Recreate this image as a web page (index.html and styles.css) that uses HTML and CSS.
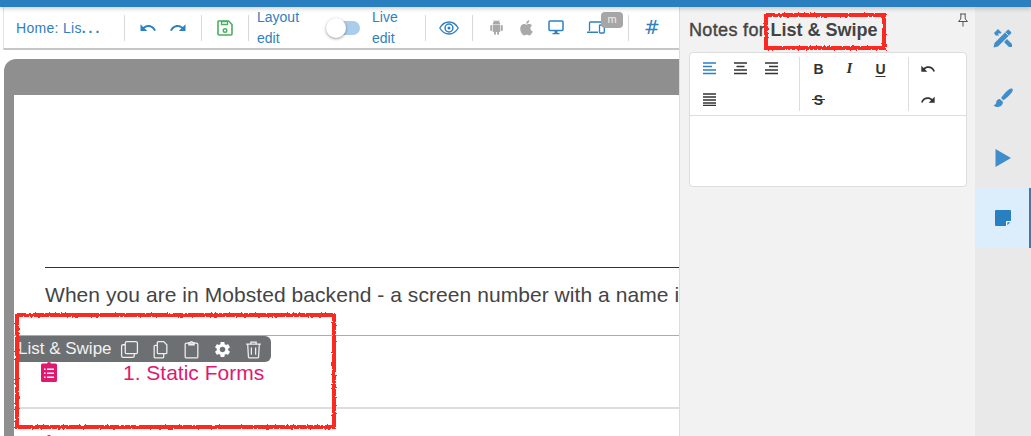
FILE: index.html
```html
<!DOCTYPE html>
<html lang="en">
<head>
<meta charset="utf-8">
<title>Notes for List &amp; Swipe</title>
<link rel="stylesheet" href="styles.css">
</head>
<body>
<svg class="defs" width="0" height="0" aria-hidden="true">
  <defs>
    <filter id="rough" x="-5%" y="-10%" width="110%" height="120%">
      <feTurbulence type="fractalNoise" baseFrequency="0.5" numOctaves="2" seed="4"/>
      <feDisplacementMap in="SourceGraphic" scale="3"/>
      <feGaussianBlur stdDeviation=".35"/>
    </filter>
    <symbol id="undo" viewBox="0 0 24 24"><path d="M12.5 8c-2.65 0-5.05.99-6.9 2.6L2 7v9h9l-3.62-3.62c1.39-1.16 3.16-1.88 5.12-1.88 3.54 0 6.55 2.31 7.6 5.5l2.37-.78C21.08 11.03 17.15 8 12.5 8z"/></symbol>
    <symbol id="redo" viewBox="0 0 24 24"><path d="M18.4 10.6C16.55 8.99 14.15 8 11.5 8c-4.65 0-8.58 3.03-9.96 7.22L3.9 16c1.05-3.19 4.05-5.5 7.6-5.5 1.95 0 3.73.72 5.12 1.88L13 16h9V7l-3.6 3.6z"/></symbol>
  </defs>
</svg>
<div class="topbar"></div>
<div class="app">
  <main class="main">
    <nav class="toolbar">
      <span class="crumb">Home: Lis<span class="dots">...</span></span>
      <i class="sep"></i>
      <div class="tool-group">
        <svg class="ic ic-blue ic-18" viewBox="0 0 24 24"><use href="#undo"/></svg>
        <svg class="ic ic-blue ic-18" viewBox="0 0 24 24"><use href="#redo"/></svg>
      </div>
      <i class="sep"></i>
      <svg class="ic-save" viewBox="0 0 16 16"><path d="M1.5 1h10L15 4.5V14a1 1 0 0 1-1 1H2a1 1 0 0 1-1-1V1.500z" fill="none" stroke="#4caf60" stroke-width="1.600"/><path d="M4.500 1.500h6v3h-6z" fill="none" stroke="#4caf60" stroke-width="1.300"/><circle cx="8" cy="10.500" r="1.800" fill="none" stroke="#4caf60" stroke-width="1.400"/></svg>
      <i class="sep"></i>
      <span class="mode mode-layout">Layout edit</span>
      <span class="switch"><span class="knob"></span></span>
      <span class="mode mode-live">Live edit</span>
      <i class="sep"></i>
      <svg class="ic-eye" viewBox="0 0 20 14"><path d="M.8 7C3 3.200 6.200 1 10 1s7 2.200 9.200 6C17 10.800 13.800 13 10 13S3 10.800.8 7z" fill="none" stroke="#2f80c2" stroke-width="1.300"/><circle cx="10" cy="7" r="3.900" fill="none" stroke="#2f80c2" stroke-width="1.500"/><circle cx="10" cy="7" r="1.500" fill="#2f80c2"/></svg>
      <i class="sep"></i>
      <div class="devices">
        <svg class="ic ic-grey dev-android" viewBox="0 0 24 24"><path d="M6 18c0 .55.45 1 1 1h1v3.500c0 .83.67 1.500 1.500 1.500s1.500-.67 1.500-1.500V19h2v3.500c0 .83.67 1.500 1.500 1.500s1.500-.67 1.500-1.500V19h1c.55 0 1-.45 1-1V8H6v10zM3.500 8C2.670 8 2 8.670 2 9.500v7c0 .83.67 1.500 1.500 1.500S5 17.330 5 16.500v-7C5 8.670 4.330 8 3.500 8zm17 0c-.83 0-1.500.67-1.500 1.500v7c0 .83.67 1.500 1.500 1.500s1.500-.67 1.500-1.500v-7c0-.83-.67-1.500-1.500-1.500zm-4.970-5.840l1.300-1.300c.2-.2.2-.51 0-.71-.2-.2-.51-.2-.71 0l-1.480 1.480C13.850 1.230 12.950 1 12 1c-.96 0-1.860.23-2.660.63L7.850.15c-.2-.2-.51-.2-.71 0-.2.2-.2.51 0 .71l1.310 1.310C6.970 3.260 6 5.010 6 7h12c0-1.990-.97-3.750-2.470-4.840z"/></svg>
        <svg class="ic ic-grey dev-apple" viewBox="3 2 17 20"><path d="M17 12.500c0-2.400 2-3.500 2-3.600-1.100-1.600-2.800-1.800-3.400-1.900-1.400-.1-2.800.9-3.500.9-.7 0-1.900-.9-3.100-.8-1.600 0-3.100.9-3.900 2.300-1.700 2.900-.4 7.200 1.200 9.500.8 1.100 1.800 2.400 3 2.400 1.200 0 1.700-.8 3.100-.8 1.500 0 1.900.8 3.200.8 1.300 0 2.100-1.200 2.900-2.300.9-1.300 1.300-2.600 1.300-2.700-.1 0-2.800-1-2.800-4.300zM14.600 5.300c.6-.8 1.100-1.900 1-3-.9 0-2.100.6-2.800 1.400-.6.7-1.100 1.800-1 2.900 1.100.1 2.100-.5 2.800-1.300z"/></svg>
        <svg class="dev-desktop" viewBox="0 0 16 15"><rect x="1" y="1" width="14" height="9.500" rx="1" fill="none" stroke="#2f80c2" stroke-width="1.500"/><path d="M6.500 11h3v2h-3zM4.500 13h7v1.200h-7z" fill="#2f80c2"/></svg>
        <span class="dev-laptop-wrap">
          <svg class="dev-laptop" viewBox="0 0 18 13"><path d="M2.500 10V2a1 1 0 0 1 1-1H14" fill="none" stroke="#2f80c2" stroke-width="1.300"/><path d="M0 10.500h11V12H0z" fill="#2f80c2"/><rect x="12.500" y="4" width="4.800" height="8" rx=".8" fill="none" stroke="#2f80c2" stroke-width="1.300"/></svg>
          <span class="badge">m</span>
        </span>
      </div>
      <i class="sep"></i>
      <span class="hash">#</span>
    </nav>
    <div class="canvas">
      <div class="device">
        <div class="screen">
          <hr class="rule">
          <p class="lead">When you are in Mobsted backend - a screen number with a name i</p>
          <div class="list-item">
            <div class="block-bar">
              <span class="block-name">List &amp; Swipe</span>
              <svg class="bar-ic" viewBox="0 0 18 18"><rect x="5" y="1.500" width="11.500" height="11.500" rx="1.500"/><path d="M5 4.500H3A1.500 1.500 0 0 0 1.500 6v9A1.500 1.500 0 0 0 3 16.500h9a1.500 1.500 0 0 0 1.500-1.500v-2"/></svg>
              <svg class="bar-ic" viewBox="0 0 18 18"><path d="M7 1.500h5l3 3V12a1 1 0 0 1-1 1H7a1 1 0 0 1-1-1V2.500a1 1 0 0 1 1-1z"/><path d="M6 5H4a1 1 0 0 0-1 1v10a1 1 0 0 0 1 1h7a1 1 0 0 0 1-1v-3"/></svg>
              <svg class="bar-ic" viewBox="0 0 18 18"><rect x="3" y="3" width="12" height="14" rx="1.200"/><path d="M6.500 4.500V2.500h1.500a1 1 0 0 1 2 0h1.500v2z"/></svg>
              <svg class="bar-ic bar-solid" viewBox="0 0 24 24"><path d="M19.140 12.940c.04-.3.06-.61.06-.94 0-.32-.02-.64-.07-.94l2.030-1.580c.18-.14.23-.41.12-.61l-1.920-3.320c-.12-.22-.37-.29-.59-.22l-2.390.96c-.5-.38-1.030-.7-1.620-.94l-.36-2.540c-.04-.24-.24-.41-.48-.41h-3.840c-.24 0-.43.17-.47.41l-.36 2.540c-.59.24-1.130.57-1.620.94l-2.390-.96c-.22-.08-.47 0-.59.22L2.740 8.870c-.12.21-.08.47.12.61l2.030 1.580c-.05.3-.09.63-.09.94s.02.64.07.94l-2.030 1.580c-.18.14-.23.41-.12.61l1.920 3.320c.12.22.37.29.59.22l2.390-.96c.5.38 1.030.7 1.620.94l.36 2.540c.05.24.24.41.48.41h3.840c.24 0 .44-.17.47-.41l.36-2.540c.59-.24 1.130-.56 1.620-.94l2.390.96c.22.08.47 0 .59-.22l1.920-3.320c.12-.22.07-.47-.12-.61l-2.010-1.580zM12 15.600c-1.980 0-3.600-1.620-3.600-3.600s1.620-3.600 3.600-3.600 3.600 1.620 3.600 3.600-1.620 3.600-3.600 3.600z"/></svg>
              <svg class="bar-ic" viewBox="0 0 18 18"><path d="M2 4h14M6.500 4V2h5v2M3.500 4l.7 12a1 1 0 0 0 1 1h7.600a1 1 0 0 0 1-1l.7-12M7 7v7M11 7v7"/></svg>
            </div>
            <svg class="form-ic" viewBox="0 0 16 20"><path d="M1.500 1.500H6a2 1.500 0 0 1 4 0h4.500a1.500 1.500 0 0 1 1.500 1.500v15.500a1.500 1.500 0 0 1-1.500 1.500h-13A1.500 1.500 0 0 1 0 18.500V3a1.500 1.500 0 0 1 1.500-1.500z" fill="#e0196f"/><path d="M3 6.500h1.500v1.500H3zM6 6.500h7v1.500H6zM3 10.500h1.500v1.500H3zM6 10.500h7v1.500H6zM3 14.500h1.500V16H3zM6 14.500h7V16H6z" fill="#fff"/></svg>
            <span class="form-title">1. Static Forms</span>
          </div>
          <div class="list-item next-item"><svg class="form-ic" viewBox="0 0 16 20"><path d="M1.500 1.500H6a2 1.500 0 0 1 4 0h4.500a1.500 1.500 0 0 1 1.500 1.500v15.500a1.500 1.500 0 0 1-1.500 1.500h-13A1.500 1.500 0 0 1 0 18.500V3a1.500 1.500 0 0 1 1.500-1.500z" fill="#e0196f"/></svg></div>
        </div>
      </div>
    </div>
  </main>

  <aside class="notes">
    <svg class="pin" viewBox="0 0 12 14"><path d="M3 1h6M4 1l-.3 5L1.500 8.500h9L8.300 6 8 1M6 8.500V13.500" fill="none" stroke="#555" stroke-width="1"/></svg>
    <h2 class="notes-title">Notes for <strong>List &amp; Swipe</strong></h2>
    <div class="editor">
      <div class="ed-toolbar">
        <div class="ed-group">
          <span class="ed-btn"><svg class="lines lines-blue" viewBox="0 0 14 13"><path d="M0 1h13M0 4.500h9M0 8h13M0 11.500h13"/></svg></span>
          <span class="ed-btn"><svg class="lines" viewBox="0 0 14 13"><path d="M0 1h13M2.500 4.500h8M0 8h13M0 11.500h13"/></svg></span>
          <span class="ed-btn"><svg class="lines" viewBox="0 0 14 13"><path d="M0 1h13M4 4.500h9M0 8h13M0 11.500h13"/></svg></span>
          <span class="ed-btn"><svg class="lines" viewBox="0 0 14 13"><path d="M0 1h13M0 4h13M0 7h13M0 10h13M0 12.500h13"/></svg></span>
        </div>
        <i class="ed-sep"></i>
        <div class="ed-group">
          <span class="ed-btn ed-b">B</span>
          <span class="ed-btn ed-i">I</span>
          <span class="ed-btn ed-u">U</span>
          <span class="ed-btn ed-s">S</span>
        </div>
        <i class="ed-sep"></i>
        <div class="ed-group ed-group-one">
          <span class="ed-btn"><svg class="ic ic-dark ic-16" viewBox="0 0 24 24"><use href="#undo"/></svg></span>
          <span class="ed-btn"><svg class="ic ic-dark ic-16" viewBox="0 0 24 24"><use href="#redo"/></svg></span>
        </div>
      </div>
      <div class="ed-body"></div>
    </div>
  </aside>

  <nav class="rail">
    <a class="rail-tile"><svg class="rail-ic" viewBox="0 0 20 20"><path d="M1 5l4-4 3.500 3.500-1.500 1.500-1-1-1 1 1 1-1 1-1-1-1 1zM14 11l5 5v3h-3l-5-5z" fill="#3f8ecb"/><path d="M1.500 15L14.500 2a1 1 0 0 1 1.500 0l2 2a1 1 0 0 1 0 1.500L5 18.500l-4.500 1z" fill="#3f8ecb"/><path d="M12.500 4.500l3 3" stroke="#e9e9e9" stroke-width="1"/></svg></a>
    <a class="rail-tile"><svg class="rail-ic" viewBox="0 0 20 20"><path d="M19 .6c-1-.6-2.400 0-4.500 1.800C12 4.500 9.500 7.500 8 10l2.500 2.200c2.500-1.700 5.800-4.600 7.800-7.200C20 3 20.200 1.400 19 .6zM6.800 11C4.500 11 3.500 12.500 3.200 14.500 3 16 2 17 .5 17.200c1.500 1.700 4.200 2.300 6.500 1.300 2.200-1 3.200-3 2.700-5z" fill="#3f8ecb"/></svg></a>
    <a class="rail-tile"><svg class="rail-ic" viewBox="0 0 20 20"><path d="M2.500 1L18 10 2.500 19z" fill="#3f8ecb"/></svg></a>
    <a class="rail-tile is-active"><svg class="rail-ic" viewBox="0 0 20 20"><rect x="2" y="2" width="16" height="16" rx="1" fill="#2a7fc0"/><path d="M18 13.500V18h-4.500z" fill="#dceefb"/><path d="M13 18v-4.200a.8.8 0 0 1 .8-.8H18v1.300h-3.700V18z" fill="#fff"/></svg></a>
  </nav>
</div>
<div class="mark mark-title"></div>
<div class="mark mark-block"></div>
</body>
</html>
```

FILE: styles.css
```css
* { box-sizing: border-box; }
html, body { margin: 0; padding: 0; height: 436px; overflow: hidden; }
body {
  display: flex;
  flex-direction: column;
  font-family: "Liberation Sans", Arial, sans-serif;
  color: #444;
  background: #fff;
  width: 1031px;
}
.defs { position: absolute; }
.topbar {
  height: 7px;
  background: #2a7fc0;
  flex: none;
  position: relative;
  z-index: 2;
  box-shadow: 0 2px 4px rgba(0,0,0,.18);
}
.app { display: flex; flex: 1; min-height: 0; }

/* main column */
.main {
  width: 680px;
  flex: none;
  display: flex;
  flex-direction: column;
  border-right: 1px solid #dcdcdc;
  overflow: hidden;
}
.toolbar {
  height: 43px;
  flex: none;
  display: flex;
  align-items: center;
  margin-left: 3px;
  padding-left: 12px;
  background: #fff;
  border-left: 1px solid #e4e4e4;
  border-bottom: 2px solid #c6c6c6;
  color: #2f80c2;
  font-size: 14px;
}
.crumb { width: 108px; letter-spacing: .3px; }
.dots { letter-spacing: 3px; font-weight: bold; }
.sep { width: 1px; height: 26px; background: #d8d8d8; flex: none; }
.tool-group { display: flex; gap: 12px; padding: 0 14px; width: 76px; justify-content: center; }
.ic { display: block; flex: none; }
.ic-blue { fill: #2f80c2; }
.ic-grey { fill: #a9a9a9; }
.ic-dark { fill: #333; }
.ic-18 { width: 18px; height: 18px; }
.ic-16 { width: 16px; height: 16px; }
.ic-save { width: 16px; height: 16px; margin: 0 15px 0 15px; flex: none; }
.mode { line-height: 21px; font-size: 14px; flex: none; }
.mode-layout { margin-left: 8px; width: 48px; }
.mode-live { width: 53px; padding-right: 18px; }
.switch {
  position: relative;
  width: 34px;
  height: 14px;
  margin: 0 12px 0 21px;
  flex: none;
}
.switch::before {
  content: "";
  position: absolute;
  left: 9px; right: 0; top: 0; bottom: 0;
  background: #a9cdea;
  border-radius: 7px;
}
.knob {
  position: absolute;
  left: 0;
  top: -3px;
  width: 20px;
  height: 20px;
  border-radius: 50%;
  background: #fff;
  box-shadow: 0 1px 3px rgba(0,0,0,.4);
}
.ic-eye { width: 20px; height: 14px; margin: 0 13px; flex: none; }
.devices { display: flex; align-items: center; width: 155px; padding-left: 16px; }
.dev-android { width: 15px; height: 15px; margin-right: 15px; }
.dev-apple { width: 14px; height: 16px; margin-right: 15px; }
.dev-desktop { width: 16px; height: 15px; margin-right: 23px; flex: none; }
.dev-laptop-wrap { position: relative; display: block; width: 18px; height: 13px; }
.dev-laptop { display: block; width: 18px; height: 13px; }
.badge {
  position: absolute;
  left: 14px;
  top: -9px;
  width: 22px;
  height: 16px;
  border-radius: 4px;
  background: #a6a6a6;
  color: #eee;
  font-size: 11px;
  line-height: 15px;
  text-align: center;
}
.hash { font-family: "DejaVu Sans", sans-serif; font-size: 19px; margin-left: 15px; line-height: 1; }

/* canvas */
.canvas { flex: 1; padding: 9px 0 0 4px; min-height: 0; overflow: hidden; }
.device {
  width: 900px;
  height: 500px;
  padding: 36px 0 0 10px;
  background: #8f8f8f;
  border-top-left-radius: 12px;
}
.screen { background: #fff; height: 100%; padding-top: 172px; position: relative; }
.rule { margin: 0 0 0 31px; border: 0; height: 1px; background: #333; }
.lead {
  margin: 0;
  padding: 15px 0 0 31px;
  font-size: 21px;
  line-height: 24px;
  letter-spacing: .06px;
  height: 67px;
  white-space: nowrap;
  color: #444;
}
.list-item {
  position: relative;
  height: 74px;
  border-top: 1px solid #1eeecb;
  border-bottom: 2px solid #ddd;
  display: flex;
  align-items: flex-start;
  padding: 26px 0 0 27px;
}
.next-item { border: 0; padding-top: 26px; }
.block-bar {
  position: absolute;
  left: 3px;
  top: 0;
  width: 254px;
  height: 26px;
  display: flex;
  align-items: center;
  background: #6d7072;
  border-radius: 0 6px 6px 0;
  color: #f2f2f2;
  font-size: 17px;
}
.block-name { width: 103px; flex: none; white-space: nowrap; padding-left: 1px; }
.bar-ic {
  width: 19px;
  height: 19px;
  margin-right: 12px;
  flex: none;
  fill: none;
  stroke: #eee;
  stroke-width: 1.200;
}
.bar-solid { fill: #fff; stroke: none; }
.form-ic { width: 16px; height: 20px; flex: none; }
.form-title { margin-left: 66px; font-size: 21px; line-height: 22px; color: #e0196f; }

/* notes */
.notes {
  position: relative;
  width: 295px;
  flex: none;
  background: #f2f2f2;
  padding: 0 8px 0 9px;
}
.pin { position: absolute; right: 6px; top: 6px; width: 12px; height: 14px; }
.notes-title {
  margin: 0;
  height: 45px;
  padding-top: 12px;
  font-size: 18px;
  line-height: 22px;
  font-weight: normal;
  letter-spacing: .35px;
  color: #444;
  -webkit-text-stroke: .4px #444;
  white-space: nowrap;
}
.notes-title strong { font-weight: bold; letter-spacing: 0; -webkit-text-stroke: 0; }
.editor {
  background: #fff;
  border: 1px solid #ddd;
  border-radius: 4px;
  height: 135px;
}
.ed-toolbar {
  height: 63px;
  display: flex;
  align-items: center;
  border-bottom: 1px solid #ddd;
}
.ed-group {
  display: grid;
  grid-template-columns: repeat(3, 31px);
  grid-auto-rows: 31px;
  padding: 0 12px 0 4px;
  align-self: flex-start;
}
.ed-group + .ed-sep + .ed-group { padding-left: 3px; }
.ed-group-one { grid-template-columns: 31px; }
.ed-sep { width: 1px; height: 54px; background: #ddd; flex: none; }
.ed-btn { display: flex; align-items: center; justify-content: center; color: #333; font-size: 14px; font-weight: bold; }
.lines { width: 14px; height: 13px; fill: none; stroke: #333; stroke-width: 1.300; }
.lines-blue { stroke: #2f80c2; }
.ed-i { font-family: "Liberation Serif", serif; font-style: italic; font-size: 15px; }
.ed-u { text-decoration: underline; text-underline-offset: 2px; }
.ed-s { position: relative; }
.ed-s::after {
  content: "";
  position: absolute;
  left: 9px;
  right: 9px;
  top: 15px;
  height: 1px;
  background: #333;
}

/* rail */
.rail { flex: 1; background: #e9e9e9; display: flex; flex-direction: column; padding-top: 1px; }
.rail-tile { height: 60px; display: flex; align-items: center; justify-content: center; flex: none; }
.rail-ic { width: 20px; height: 20px; }
.is-active { background: #dceefb; border-right: 2px solid #2a7fc0; padding-left: 2px; }

/* hand-drawn annotations */
.mark {
  position: absolute;
  border: 4px solid #fa2a22;
  filter: url(#rough);
  pointer-events: none;
}
.mark-title { left: 764px; top: 13px; width: 122px; height: 37px; }
.mark-block { left: 15px; top: 313px; width: 321px; height: 116px; }
```
